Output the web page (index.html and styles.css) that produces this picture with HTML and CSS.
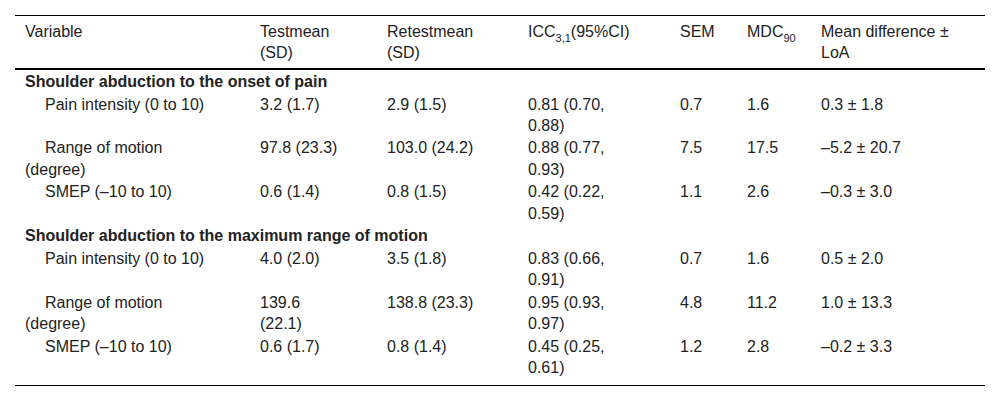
FILE: index.html
```html
<!DOCTYPE html>
<html lang="en">
<head>
<meta charset="utf-8">
<title>Reliability table</title>
<link rel="stylesheet" href="styles.css">
</head>
<body>
<div class="wrap">
<table class="data">
  <colgroup>
    <col class="c1"><col class="c2"><col class="c3"><col class="c4"><col class="c5"><col class="c6"><col class="c7">
  </colgroup>
  <thead>
    <tr>
      <th>Variable</th>
      <th>Testmean (SD)</th>
      <th>Retestmean (SD)</th>
      <th>ICC<sub>3,1</sub>(95%CI)</th>
      <th class="narrow">SEM</th>
      <th class="narrow">MDC<sub>90</sub></th>
      <th class="wide">Mean difference ± LoA</th>
    </tr>
  </thead>
  <tbody>
    <tr class="section"><td colspan="7">Shoulder abduction to the onset of pain</td></tr>
    <tr>
      <td class="ind">Pain intensity (0 to 10)</td><td>3.2 (1.7)</td><td>2.9 (1.5)</td><td>0.81 (0.70, 0.88)</td><td class="narrow">0.7</td><td class="narrow">1.6</td><td class="wide">0.3 ± 1.8</td>
    </tr>
    <tr>
      <td class="ind">Range of motion (degree)</td><td>97.8 (23.3)</td><td>103.0 (24.2)</td><td>0.88 (0.77, 0.93)</td><td class="narrow">7.5</td><td class="narrow">17.5</td><td class="wide">–5.2 ± 20.7</td>
    </tr>
    <tr>
      <td class="ind">SMEP (–10 to 10)</td><td>0.6 (1.4)</td><td>0.8 (1.5)</td><td>0.42 (0.22, 0.59)</td><td class="narrow">1.1</td><td class="narrow">2.6</td><td class="wide">–0.3 ± 3.0</td>
    </tr>
    <tr class="section"><td colspan="7">Shoulder abduction to the maximum range of motion</td></tr>
    <tr>
      <td class="ind">Pain intensity (0 to 10)</td><td>4.0 (2.0)</td><td>3.5 (1.8)</td><td>0.83 (0.66, 0.91)</td><td class="narrow">0.7</td><td class="narrow">1.6</td><td class="wide">0.5 ± 2.0</td>
    </tr>
    <tr>
      <td class="ind">Range of motion (degree)</td><td>139.6 (22.1)</td><td>138.8 (23.3)</td><td>0.95 (0.93, 0.97)</td><td class="narrow">4.8</td><td class="narrow">11.2</td><td class="wide">1.0 ± 13.3</td>
    </tr>
    <tr class="last">
      <td class="ind">SMEP (–10 to 10)</td><td>0.6 (1.7)</td><td>0.8 (1.4)</td><td>0.45 (0.25, 0.61)</td><td class="narrow">1.2</td><td class="narrow">2.8</td><td class="wide">–0.2 ± 3.3</td>
    </tr>
  </tbody>
</table>
</div>
</body>
</html>
```

FILE: styles.css
```css
html, body {
  margin: 0;
  padding: 0;
  background: #fff;
}

.wrap {
  padding: 15px;
}

.data {
  width: 970px;
  table-layout: fixed;
  border-collapse: collapse;
  font-family: "Liberation Sans", Arial, sans-serif;
  font-size: 16px;
  line-height: 21.2px;
  color: #222;
  border-top: 1px solid #000;
  border-bottom: 1px solid #000;
}

.c1 { width: 235px; }
.c2 { width: 127px; }
.c3 { width: 141px; }
.c4 { width: 152px; }
.c5 { width: 67px; }
.c6 { width: 74px; }
.c7 { width: 174px; }

.data th {
  font-weight: normal;
  text-align: left;
  vertical-align: top;
  line-height: 21.4px;
  padding: 5px 35px 4px 10px;
  border-bottom: 2px solid #000;
}

.data td {
  text-align: left;
  vertical-align: top;
  padding: 1px 35px 0.5px 10px;
}

.data .narrow {
  padding-right: 4px;
}

.data .wide {
  padding-right: 30px;
}

.data sub {
  font-size: 11px;
  line-height: 0;
  vertical-align: -5px;
}

.data .section td {
  font-weight: bold;
  white-space: nowrap;
}

.data td.ind {
  text-indent: 20px;
}

.data .last td {
  padding-bottom: 6.5px;
}
```
